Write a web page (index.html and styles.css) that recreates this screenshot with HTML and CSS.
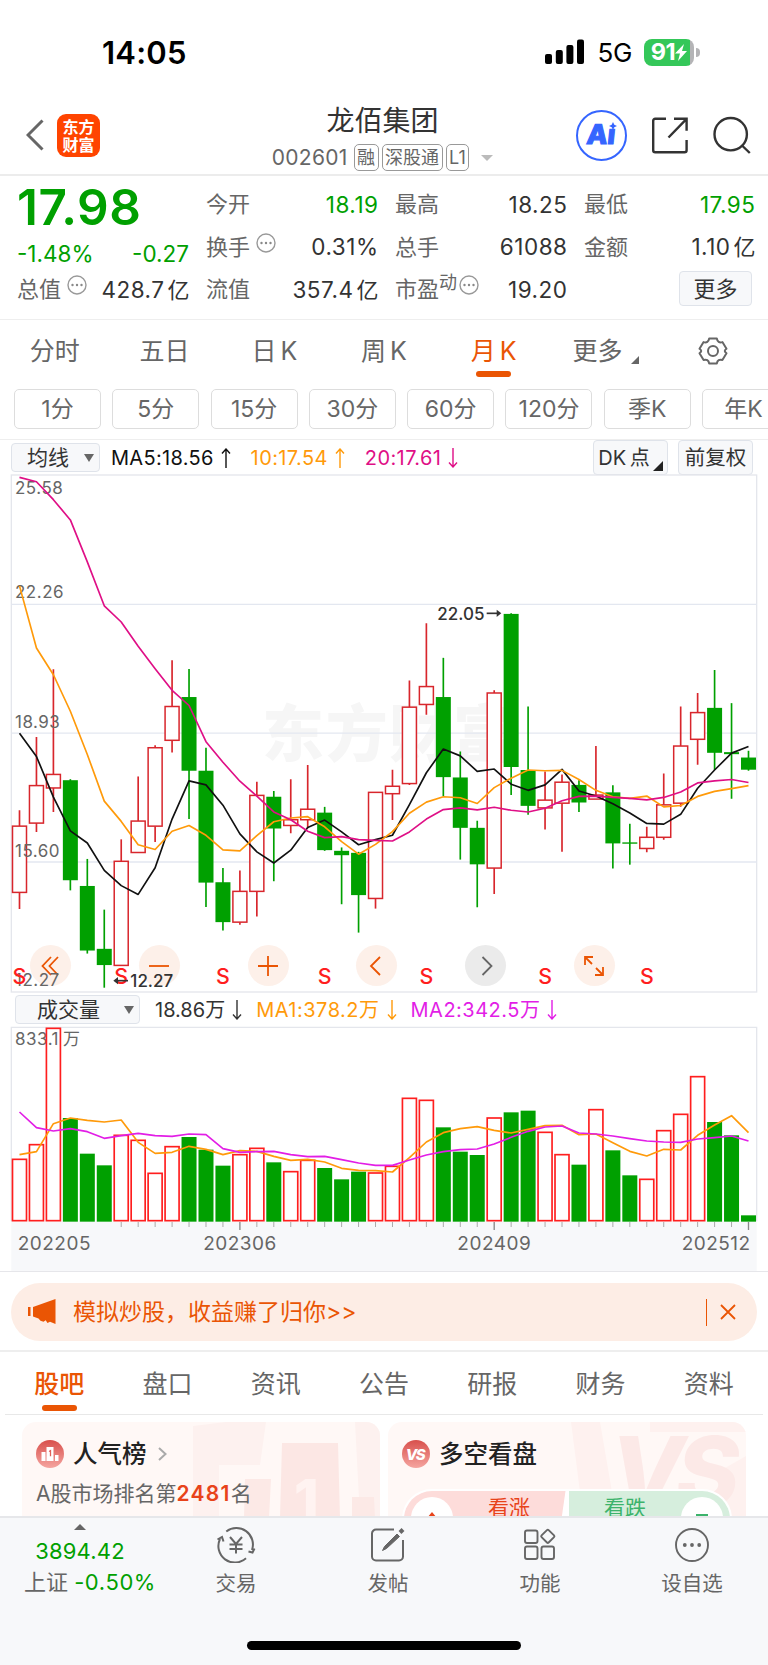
FILE: index.html
```html
<!DOCTYPE html>
<html lang="zh-CN">

<head>
    <meta charset="UTF-8">
    <meta name="viewport" content="width=device-width, initial-scale=1.0">
    <title>龙佰集团 002601</title>
    <link rel="stylesheet" href="styles.css">
</head>

<body>

    <div class="status-bar">
        <span class="clock">14:05</span>
        <div class="status-right">
            <svg class="signal" width="39" height="26" viewBox="0 0 39 26">
                <rect x="0" y="15" width="7" height="10" rx="2" />
                <rect x="10.8" y="11" width="7" height="14" rx="2" />
                <rect x="21.4" y="6" width="7" height="19" rx="2" />
                <rect x="32" y="0.5" width="7" height="24.5" rx="2" />
            </svg>
            <span class="network">5G</span>
            <div class="battery">
                <span>91</span>
                <svg width="12" height="17" viewBox="0 0 12 17"><path d="M9 0L0 9.5h5L3 17l9-10H7z" fill="#fff" /></svg>
            </div>
            <i class="battery-cap"></i>
        </div>
    </div>

    <header class="header">
        <div class="header-left">
            <svg width="18" height="32" viewBox="0 0 18 32"><path d="M16.5 1.5L2 16l14.5 14.5" fill="none" stroke="#666" stroke-width="3" /></svg>
            <div class="logo">东方<br>财富</div>
        </div>
        <div class="header-title">
            <h1>龙佰集团</h1>
            <div class="stock-code">
                <span class="code">002601</span>
                <span class="tag">融</span>
                <span class="tag">深股通</span>
                <span class="tag">L1</span>
                <i class="arrow-down"></i>
            </div>
        </div>
        <div class="header-right">
            <div class="ai">
                <span class="ai-text">A<span>ı</span></span>
                <svg class="ai-star" width="8" height="8" viewBox="0 0 8 8"><path d="M4 0l1.3 2.7L8 4 5.3 5.3 4 8 2.7 5.3 0 4l2.7-1.3z" fill="#3565ff" /></svg>
            </div>
            <svg class="share" width="38" height="37" viewBox="0 0 38 37" fill="none" stroke="#333" stroke-width="2.4">
                <path d="M15 1.8H4.2a2 2 0 0 0-2 2v29.4a2 2 0 0 0 2 2h29.4a2 2 0 0 0 2-2V23" />
                <path d="M23 1.8h12.6v12M35.6 1.8L17.5 20.5" />
            </svg>
            <svg class="search" width="38" height="38" viewBox="0 0 38 38" fill="none" stroke="#333" stroke-width="2.4">
                <circle cx="17.7" cy="18.2" r="16.2" />
                <path d="M29 29.5l7.8 7.5" />
            </svg>
        </div>
    </header>

    <section class="quote">
        <div class="price-col">
            <div class="price">17.98</div>
            <div class="change"><span>-1.48%</span><span>-0.27</span></div>
            <div class="cell"><label>总值</label><svg class="dots"><use href="#dots" /></svg><b>428.7<em>亿</em></b></div>
        </div>
        <div class="cells">
            <div class="cell"><label>今开</label><b class="down">18.19</b></div>
            <div class="cell"><label>最高</label><b>18.25</b></div>
            <div class="cell"><label>最低</label><b class="down">17.95</b></div>
            <div class="cell"><label>换手</label><svg class="dots"><use href="#dots" /></svg><b>0.31%</b></div>
            <div class="cell"><label>总手</label><b>61088</b></div>
            <div class="cell"><label>金额</label><b>1.10<em>亿</em></b></div>
            <div class="cell"><label>流值</label><b>357.4<em>亿</em></b></div>
            <div class="cell"><label>市盈<sup>动</sup></label><svg class="dots tight"><use href="#dots" /></svg><b>19.20</b></div>
            <div class="cell"><button class="more">更多</button></div>
        </div>
    </section>

    <nav class="period-tabs">
        <span>分时</span>
        <span>五日</span>
        <span>日<u>K</u></span>
        <span>周<u>K</u></span>
        <span class="active">月<u>K</u></span>
        <span class="has-more">更多<i></i></span>
        <span>
            <svg width="30" height="28" viewBox="0 0 30 28" fill="none" stroke="#666" stroke-width="2">
                <path d="M11.2 1.5h7.6c.6 3.2 2.6 4.5 5.6 3.6l4.1 6.7c-2.3 1.6-2.3 2.9 0 4.5l-4.1 6.7c-3-.9-5 .3-5.6 3.5h-7.6c-.6-3.2-2.6-4.4-5.6-3.5l-4.1-6.7c2.3-1.6 2.3-2.9 0-4.5l4.1-6.7c3 .9 5-.4 5.6-3.6z" stroke-linejoin="round" />
                <circle cx="15" cy="14" r="5" />
            </svg>
        </span>
    </nav>

    <div class="minutes">
        <span>1分</span><span>5分</span><span>15分</span><span>30分</span><span>60分</span><span>120分</span><span>季K</span><span>年K</span>
    </div>

    <div class="indicator ma-bar">
        <div class="select">均线<i></i></div>
        <span class="ma5">MA5:18.56<svg class="trend"><use href="#up" /></svg></span>
        <span class="ma10">10:17.54<svg class="trend"><use href="#up" /></svg></span>
        <span class="ma20">20:17.61<svg class="trend"><use href="#down" /></svg></span>
        <div class="dk">DK 点<i></i></div>
        <div class="fq">前复权</div>
    </div>

    <div class="chart">
        <svg id="kline" viewBox="0 15 2304 1551"></svg>
        <div class="tools">
            <span><svg viewBox="0 0 20 20"><path d="M10 1L1.500 10l8.500 9M17 1L8.500 10l8.500 9" /></svg></span>
            <span><svg viewBox="0 0 20 20"><path d="M0 10h20" /></svg></span>
            <span><svg viewBox="0 0 20 20"><path d="M0 10h20M10 0v20" /></svg></span>
            <span><svg viewBox="0 0 20 20"><path d="M13 1L4 10l9 9" /></svg></span>
            <span class="disabled"><svg viewBox="0 0 20 20"><path d="M6.500 1l9 9-9 9" /></svg></span>
            <span><svg viewBox="0 0 20 20"><path d="M1 9V1h8M1 1l7 7M19 11v8h-8M19 19l-7-7" /></svg></span>
        </div>
    </div>

    <div class="indicator vol-bar">
        <div class="select">成交量<i></i></div>
        <span class="vol">18.86万<svg class="trend"><use href="#down" /></svg></span>
        <span class="ma10">MA1:378.2万<svg class="trend"><use href="#down" /></svg></span>
        <span class="vma2">MA2:342.5万<svg class="trend"><use href="#down" /></svg></span>
    </div>

    <svg id="volume" viewBox="0 111 2304 732"></svg>

    <div class="promo-wrap">
        <div class="promo">
            <svg width="28" height="26" viewBox="0 0 28 26" fill="#ea5504">
                <path d="M0 8h2.500v9H0zM5 8L27.500 0v25L22 22.800 19.500 24l-1.800-2.800-2.200 1.500-3-1-2-2.200L5 17.500z" />
            </svg>
            <span>模拟炒股，收益赚了归你&gt;&gt;</span>
            <i></i>
            <svg width="16" height="16" viewBox="0 0 16 16"><path d="M1 1l14 14M15 1L1 15" stroke="#ea5504" stroke-width="1.800" /></svg>
        </div>
    </div>

    <nav class="info-tabs">
        <span class="active">股吧</span><span>盘口</span><span>资讯</span><span>公告</span><span>研报</span><span>财务</span><span>资料</span>
    </nav>

    <div class="cards">
        <div class="card">
            <svg class="card-bg" width="358" height="96" viewBox="0 0 358 96">
                <path d="M171 4l33-4h40l-6 43h-41v53h-26z" fill="#fdf1ef" />
                <path d="M333 0h25v96h-20z" fill="#fdf1ef" />
                <path d="M223 57h26l-2 39h-25zM330 75h22l1 21h-23z" fill="#fce9e6" />
                <path d="M260 21h56l2 75h-60z" fill="#fce7e4" />
                <text x="272" y="98" font-size="56" font-weight="800" fill="#fff3f1">1</text>
            </svg>
            <div class="card-title">
                <svg width="28" height="28" viewBox="0 0 28 28">
                    <circle cx="14" cy="14" r="14" fill="url(#badge)" />
                    <path d="M5.500 12h4v9h-4zM10.500 7h7v14h-7zM19 15h3.500v6H19z" fill="#fff" />
                    <path d="M13 11.500l1.500-.8v5.500" fill="none" stroke="#e05f58" stroke-width="1.300" />
                </svg>
                <h2>人气榜</h2>
                <svg class="chev" width="9" height="14" viewBox="0 0 9 14"><path d="M1 1l6.500 6L1 13" fill="none" stroke="#aaa" stroke-width="2" /></svg>
            </div>
            <p>A股市场排名第<strong>2481</strong>名</p>
        </div>
        <div class="card">
            <svg class="card-bg" width="358" height="96" viewBox="0 0 358 96">
                <path d="M183 0h29l12 70h-32zM262 0h96v10H262zM330 50l28-16v62h-24z" fill="#fef1ef" />
                <text x="222" y="84" font-size="96" font-weight="800" font-style="italic" letter-spacing="-8" fill="#fce9e7">VS</text>
            </svg>
            <div class="card-title">
                <svg width="28" height="28" viewBox="0 0 28 28">
                    <circle cx="14" cy="14" r="14" fill="url(#badge)" />
                    <text x="13" y="19.500" text-anchor="middle" font-size="15" font-weight="800" font-style="italic" letter-spacing="-1.500" fill="#fff">VS</text>
                </svg>
                <h2>多空看盘</h2>
            </div>
            <div class="vote">
                <div class="rise"><i><svg width="10" height="14" viewBox="0 0 10 14"><path d="M5 0l5 6H0z" fill="#e8431a" /></svg></i><span>看涨</span></div>
                <div class="fall"><span>看跌</span><i><svg width="12" height="14" viewBox="0 0 12 14"><path d="M0 2h12v5H0z" fill="#3cb36b" /></svg></i></div>
            </div>
        </div>
    </div>

    <footer class="bottom-bar">
        <div class="index">
            <i></i>
            <b>3894.42</b>
            <p>上证 <span>-0.50%</span></p>
        </div>
        <div class="item">
            <svg width="40" height="36" viewBox="0 0 40 36" fill="none" stroke="#666" stroke-width="2">
                <path d="M10.300 4.500A16.500 16.500 0 0 1 36 23M30 31.300A16.500 16.500 0 0 1 4 12" />
                <path d="M1.500 12.500l4.500-2.500 1.500 4.500M32.500 24.500l4 1 2-4" />
                <path d="M14 10l6 7 6-7M20 17v9.500M13.500 17.500h13M13.500 22h13" />
            </svg>
            <span>交易</span>
        </div>
        <div class="item">
            <svg width="36" height="36" viewBox="0 0 36 36" fill="none" stroke="#666" stroke-width="2">
                <path d="M24 2.500H6a4 4 0 0 0-4 4v23a4 4 0 0 0 4 4h23a4 4 0 0 0 4-4V13" />
                <path d="M12.500 23.500l2-4L27 7l2.500 2.500-13 12z" fill="#666" stroke-width="1" />
                <path d="M30 5.500l3-3" stroke-width="4" />
            </svg>
            <span>发帖</span>
        </div>
        <div class="item">
            <svg width="36" height="36" viewBox="0 0 36 36" fill="none" stroke="#666" stroke-width="1.900">
                <rect x="3" y="3.500" width="12.500" height="12.500" rx="2" />
                <rect x="3" y="19.500" width="12.500" height="12.500" rx="2" />
                <rect x="19.500" y="19.500" width="12.500" height="12.500" rx="2" />
                <rect x="20.800" y="4.300" width="10" height="10" rx="1.200" transform="rotate(45 25.800 9.300)" />
            </svg>
            <span>功能</span>
        </div>
        <div class="item">
            <svg width="36" height="36" viewBox="0 0 36 36" fill="none" stroke="#666" stroke-width="1.900">
                <circle cx="18" cy="18" r="16" />
                <g fill="#666" stroke="none"><circle cx="10.800" cy="18" r="1.900" /><circle cx="18" cy="18" r="1.900" /><circle cx="25.200" cy="18" r="1.900" /></g>
            </svg>
            <span>设自选</span>
        </div>
        <div class="home-indicator"></div>
    </footer>

    <!-- shared symbols -->
    <svg class="defs" width="0" height="0">
        <linearGradient id="badge" x1="0" y1="0" x2="0" y2="1">
            <stop offset="0" stop-color="#d8504c" />
            <stop offset="1" stop-color="#f5a5a0" />
        </linearGradient>
        <symbol id="dots" viewBox="0 0 20 20">
            <circle cx="10" cy="10" r="9" fill="none" stroke="#999" stroke-width="1.400" />
            <circle cx="5.500" cy="10" r="1.200" fill="#888" />
            <circle cx="10" cy="10" r="1.200" fill="#888" />
            <circle cx="14.500" cy="10" r="1.200" fill="#888" />
        </symbol>
        <symbol id="up" viewBox="0 0 10 20"><path d="M5 20V1M1 5.500L5 1l4 4.500" fill="none" stroke="currentColor" stroke-width="1.400" /></symbol>
        <symbol id="down" viewBox="0 0 10 20"><path d="M5 0v19M1 14.500L5 19l4-4.500" fill="none" stroke="currentColor" stroke-width="1.400" /></symbol>
    </svg>

    <script>
        const GREEN = '#00a000';
        const RED = '#d8262c';
        const STEP = 50.86;
        const x = i => 58.5 + i * STEP;
        // stretch the k-line values to the panel height
        const y = v => +(15 + (v - 15) * 1.0139).toFixed(1);

        // [color, high, body top, body bottom, low]
        const candles = [
            ['r', 1007, 1054, 1250, 1299], ['r', 790, 934, 1045, 1071], ['r', 590, 901, 941, 1012], ['g', 915, 918, 1214, 1244],
            ['g', 1151, 1231, 1422, 1431], ['g', 1301, 1417, 1465, 1532], ['r', 1093, 1158, 1466, 1466], ['r', 907, 1039, 1132, 1132],
            ['r', 815, 822, 1054, 1101], ['r', 563, 700, 800, 836], ['g', 589, 672, 890, 1033], ['g', 822, 890, 1221, 1293],
            ['g', 1178, 1220, 1338, 1363], ['r', 1185, 1247, 1338, 1346], ['r', 923, 963, 1247, 1321], ['g', 950, 967, 1061, 1217],
            ['r', 915, 1035, 1052, 1075], ['r', 873, 1004, 1035, 1060], ['g', 997, 1014, 1125, 1127], ['g', 1117, 1127, 1140, 1285],
            ['g', 1130, 1133, 1258, 1369], ['r', 954, 954, 1268, 1298], ['r', 887, 936, 958, 1036], ['r', 623, 702, 928, 932],
            ['r', 454, 641, 694, 724], ['g', 556, 672, 909, 965], ['g', 833, 910, 1059, 1153], ['g', 1038, 1059, 1167, 1294],
            ['r', 652, 660, 1178, 1255], ['g', 424, 426, 879, 962], ['g', 700, 888, 994, 1020], ['r', 892, 977, 1000, 1064],
            ['r', 901, 924, 986, 1130], ['g', 918, 932, 984, 1012], ['r', 817, 962, 974, 974], ['g', 933, 954, 1105, 1179],
            ['g', 1047, 1102, 1106, 1168], ['r', 1056, 1087, 1120, 1131], ['r', 898, 991, 1087, 1094], ['r', 700, 817, 986, 997],
            ['r', 660, 718, 797, 872], ['g', 592, 704, 837, 888], ['g', 690, 835, 841, 973], ['g', 831, 851, 887, 890]
        ];
        const ma5 = [779, 848, 968, 1068, 1104, 1185, 1230, 1256, 1177, 1033, 920, 932, 992, 1077, 1130, 1163, 1125, 1058, 1036, 1071, 1109, 1094, 1081, 990, 896, 826, 846, 892, 885, 930, 948, 932, 886, 950, 965, 988, 1015, 1046, 1048, 1019, 942, 888, 838, 818];
        const ma10 = [343, 527, 606, 714, 842, 980, 1040, 1109, 1123, 1069, 1052, 1081, 1124, 1127, 1082, 1041, 1030, 1026, 1056, 1100, 1137, 1108, 1070, 1016, 983, 967, 970, 987, 940, 912, 888, 890, 889, 916, 948, 967, 972, 965, 997, 993, 966, 951, 943, 934];
        const ma20 = [22, 35, 88, 148, 272, 402, 450, 522, 588, 652, 697, 804, 865, 921, 965, 1012, 1035, 1069, 1088, 1085, 1094, 1096, 1098, 1071, 1033, 1005, 1000, 1006, 998, 1007, 1012, 1001, 979, 966, 965, 969, 972, 976, 969, 953, 926, 920, 916, 925];

        const volumes = [508, 464, 115, 384, 491, 526, 436, 451, 550, 470, 441, 479, 527, 494, 475, 517, 545, 511, 534, 568, 545, 549, 529, 325, 331, 412, 485, 495, 384, 367, 362, 427, 494, 524, 359, 481, 556, 568, 422, 373, 260, 396, 436, 676];
        const vma1 = [494, 485, 401, 384, 391, 396, 390, 457, 490, 487, 469, 478, 494, 482, 484, 499, 511, 508, 516, 535, 541, 542, 546, 503, 456, 428, 416, 410, 421, 429, 418, 407, 406, 434, 432, 458, 484, 498, 478, 480, 436, 405, 377, 428];
        const vma2 = [366, 413, 423, 416, 425, 445, 437, 430, 437, 439, 432, 434, 476, 487, 485, 484, 494, 500, 499, 509, 519, 526, 526, 510, 495, 485, 479, 477, 462, 442, 424, 411, 408, 429, 432, 438, 446, 453, 456, 457, 447, 443, 438, 453];

        function line(points, color) {
            const pts = points.map((v, i) => `${x(i)},${v}`).join(' ');
            return `<polyline points="${pts}" fill="none" stroke="${color}" stroke-width="5" stroke-linejoin="round" />`;
        }

        function drawKline() {
            let s = '<rect x="34" y="15" width="2236" height="1551" class="frame" />';
            s += '<text x="786" y="862" class="watermark">东方财富</text>';
            [398, 779, 1160].forEach(v => s += `<path d="M34 ${y(v)}H2270" class="grid" />`);
            candles.forEach(([c, high, open, close, low], i) => {
                const cx = x(i);
                const [hi, top, bot, lo] = [high, open, close, low].map(y);
                if (c === 'g') {
                    s += `<path d="M${cx} ${hi}V${lo}" stroke="${GREEN}" stroke-width="5" />`;
                    s += `<rect x="${cx - 22.5}" y="${top}" width="45" height="${Math.max(bot - top, 4)}" fill="${GREEN}" />`;
                } else {
                    s += `<path d="M${cx} ${hi}V${top}M${cx} ${bot}V${lo}" stroke="${RED}" stroke-width="5" />`;
                    s += `<rect x="${cx - 21}" y="${top}" width="42" height="${bot - top}" fill="#fff" stroke="${RED}" stroke-width="4.5" />`;
                }
            });
            [[25.58, 72], [22.26, 380], [18.93, 763], ['15.60', 1144], [12.27, 1526]].forEach(([label, v]) => {
                s += `<text x="45" y="${y(v)}" class="axis">${label}</text>`;
            });
            s += line(ma5.map(y), '#111') + line(ma10.map(y), '#ff9a0a') + line(ma20.map(y), '#df0f86');
            [0, 6, 12, 18, 24, 31, 37].forEach(i => s += `<text x="${x(i)}" y="${y(1520)}" class="sell">S</text>`);
            s += '<text x="1312" y="450" class="mark">22.05</text><path d="M1460 430h32" class="mark-line" /><path d="M1490 419l14 11-14 11z" fill="#333" />';
            s += '<text x="391" y="1552" class="mark">12.27</text><path d="M384 1532h-32" class="mark-line" /><path d="M354 1521l-14 11 14 11z" fill="#333" />';
            document.getElementById('kline').innerHTML = s;
        }

        function drawVolume() {
            let s = '<rect x="34" y="694" width="2236" height="150" fill="#f7f8fa" />';
            s += '<path d="M34 694V112H2270V694" class="frame" />';
            s += '<text x="45" y="164" class="axis">833.1<tspan dx="12">万</tspan></text>';
            volumes.forEach((top, i) => {
                const cx = x(i);
                if (candles[i][0] === 'g') {
                    s += `<rect x="${cx - 22.5}" y="${top}" width="45" height="${695 - top}" fill="${GREEN}" />`;
                } else {
                    s += `<rect x="${cx - 21}" y="${top}" width="42" height="${692 - top}" fill="none" stroke="#ff1e1e" stroke-width="5" />`;
                }
                if (i > 5) {
                    const major = [13, 28, 43].includes(i);
                    s += `<path d="M${cx} 696V${major ? 720 : 711}" stroke="${major ? '#888' : '#aaa'}" stroke-width="${major ? 4 : 3}" />`;
                }
            });
            s += line(vma1, '#ff9a0a') + line(vma2, '#e21ee6');
            s += '<text x="53" y="780" class="date">202205</text><text x="720" y="780" class="date middle">202306</text>';
            s += '<text x="1483" y="780" class="date middle">202409</text><text x="2252" y="780" class="date end">202512</text>';
            document.getElementById('volume').innerHTML = s;
        }

        drawKline();
        drawVolume();
    </script>

</body>

</html>
```
FILE: styles.css
```css
/* Global Styles */
* {
    box-sizing: border-box;
}

body {
    font-family: Inter, "Noto Sans CJK SC", sans-serif;
    line-height: 1.2;
    background-color: #fff;
    margin: 0;
    width: 768px;
    height: 1665px;
    overflow: hidden;
    color: #333;
    display: flex;
    flex-direction: column;
}

body > * {
    flex-shrink: 0;
}

h1, h2, p {
    margin: 0;
    font-weight: 400;
}

svg {
    display: block;
    flex-shrink: 0;
}

i, em, u {
    font-style: normal;
    text-decoration: none;
}

span, label, b {
    white-space: nowrap;
}

.defs {
    position: absolute;
}

/* Status bar */
.status-bar {
    height: 105px;
    padding: 0 68px 0 102px;
    display: flex;
    justify-content: space-between;
    align-items: center;
    color: #000;
}

.clock {
    font-size: 31px;
    font-weight: 600;
    letter-spacing: 0.2px;
}

.status-right {
    display: flex;
    align-items: center;
    margin-bottom: 1px;
}

.network {
    font-size: 26px;
    letter-spacing: -0.3px;
    margin: 1px 12px 0 13px;
}

.battery {
    width: 50px;
    height: 27px;
    border-radius: 8px;
    background: linear-gradient(to right, #34c759 46px, #b4b4b6 46px);
    display: flex;
    align-items: center;
    justify-content: center;
    color: #fff;
    font-size: 23.500px;
    font-weight: 700;
    letter-spacing: -0.5px;
}

.battery-cap {
    width: 4px;
    height: 9px;
    margin-left: 2px;
    border-radius: 0 4px 4px 0;
    background: #b4b4b6;
}

/* Header */
.header {
    height: 71px;
    border-bottom: 2px solid #ececec;
    display: grid;
    grid-template-columns: 240px 1fr 240px;
}

.header-left {
    display: flex;
    align-items: center;
    padding: 0 0 9px 26px;
    gap: 13px;
}

.logo {
    width: 43px;
    height: 43px;
    border-radius: 9px;
    background: #ff4400;
    color: #fff;
    font-size: 16px;
    font-weight: 700;
    line-height: 18px;
    text-align: center;
    padding-top: 4px;
}

.header-title {
    text-align: center;
    display: flex;
    flex-direction: column;
    align-items: center;
    padding-right: 3px;
}

.header-title h1 {
    font-size: 28px;
    line-height: 32px;
}

.stock-code {
    display: flex;
    align-items: center;
    margin-top: 7px;
    color: #666;
}

.code {
    font-size: 21px;
    letter-spacing: 0.3px;
    margin-right: 6px;
}

.tag {
    height: 27px;
    line-height: 25px;
    padding: 0 2.500px;
    border: 1.5px solid #999;
    border-radius: 5px;
    font-size: 18px;
    margin-right: 3px;
}

.arrow-down {
    margin-left: 9px;
    border: 6px solid transparent;
    border-top-color: #bbb;
    border-bottom: 0;
}

.header-right {
    display: flex;
    align-items: center;
    padding: 0 0 9px 48px;
}

.ai {
    position: relative;
    width: 51px;
    height: 51px;
    border: 2.5px solid #3565ff;
    border-radius: 50%;
    color: #3565ff;
    font-size: 27px;
    font-weight: 800;
    line-height: 45px;
    text-align: center;
}

.ai-text {
    display: inline-block;
    -webkit-text-stroke: 1.2px #3565ff;
    transform: skewX(-6deg);
}

.ai-star {
    position: absolute;
    right: 8px;
    top: 10px;
}

.share {
    margin-left: 24px;
}

.search {
    margin-left: 24px;
}

/* Quote */
.quote {
    height: 144px;
    padding: 7px 12px 0 17px;
    border-bottom: 1px solid #eee;
    display: flex;
    gap: 17px;
}

.price-col {
    width: 172px;
    display: flex;
    flex-direction: column;
}

.price {
    height: 50px;
    line-height: 49px;
    font-size: 49.500px;
    font-weight: 600;
    color: #00a000;
    letter-spacing: 0.5px;
}

.change {
    height: 35px;
    line-height: 41px;
    font-size: 22.500px;
    color: #00a000;
    display: flex;
    justify-content: space-between;
}

.cells {
    flex: 1;
    display: grid;
    grid-template-columns: 172px 172px 171px;
    grid-auto-rows: 42.5px;
    column-gap: 17px;
}

.cell {
    height: 42.5px;
    display: flex;
    align-items: center;
    font-size: 22px;
}

.cell label {
    color: #666;
}

.cell b {
    font-size: 22.500px;
    font-weight: 400;
    letter-spacing: 0.5px;
    margin-left: auto;
    margin-right: -0.5px;
}

.cell em {
    font-size: 22px;
    letter-spacing: 0;
    margin-left: 3px;
}

.cell sup {
    font-size: 18px;
    line-height: 0;
    vertical-align: 8px;
}

.cell .down {
    color: #00a000;
}

.dots {
    width: 20px;
    height: 20px;
    margin: 0 0 8px 6px;
}

.dots.tight {
    margin-left: 2px;
}

.more {
    margin-left: auto;
    margin-right: 3px;
    margin-bottom: 1px;
    width: 73px;
    height: 35px;
    padding: 0;
    font: inherit;
    color: #333;
    background: #f7f8fa;
    border: 1.5px solid #dfe3ea;
    border-radius: 4px;
}

/* Period tabs */
.period-tabs {
    height: 69px;
    display: grid;
    grid-template-columns: repeat(7, 1fr);
    font-size: 25px;
    color: #666;
}

.period-tabs span {
    position: relative;
    display: flex;
    align-items: center;
    justify-content: center;
    padding-bottom: 7px;
}

.period-tabs u {
    margin-left: 4px;
}

.period-tabs .has-more {
    padding-left: 5px;
}

.period-tabs .active,
.info-tabs .active {
    color: #ea5504;
}

.period-tabs .active::after,
.info-tabs .active::after {
    content: "";
    position: absolute;
    bottom: 12px;
    width: 35px;
    height: 6px;
    border-radius: 3px;
    background: #ea5504;
}

.has-more i {
    margin: 18px 0 0 9px;
    border-left: 8px solid transparent;
    border-bottom: 8px solid #666;
}

.minutes {
    height: 51px;
    padding-left: 14px;
    border-bottom: 1px solid #eee;
    display: flex;
    gap: 11.300px;
    overflow: hidden;
}

.minutes span {
    flex: 0 0 87px;
    height: 40px;
    line-height: 39px;
    border: 1.5px solid #ddd;
    border-radius: 5px;
    text-align: center;
    font-size: 23px;
    color: #666;
}

.minutes span:last-child {
    text-indent: -4px;
}

/* Indicator rows */
.indicator {
    display: flex;
    align-items: center;
    font-size: 20px;
}

.indicator span {
    display: flex;
    align-items: center;
}

.ma-bar {
    height: 35px;
    padding-left: 11px;
}

.vol-bar {
    height: 35px;
    padding-left: 15px;
}

.select {
    width: 89px;
    height: 29px;
    padding-left: 15px;
    font-size: 21px;
    border: 1px solid #dfe3ea;
    border-radius: 4px;
    background: #f7f8fa;
    display: flex;
    align-items: center;
    justify-content: space-between;
}

.select i {
    margin-right: 5px;
    border: 5px solid transparent;
    border-top: 8px solid #666;
    border-bottom: 0;
}

.vol-bar .select {
    width: 125px;
    padding-left: 21px;
}

.trend {
    width: 10px;
    height: 20px;
    margin-left: 7px;
}

.ma5 {
    color: #111;
    margin-left: 11px;
    letter-spacing: 0.3px;
}

.ma10 {
    color: #ff9a0a;
    margin-left: 20px;
    letter-spacing: 0.4px;
}

.ma20 {
    color: #df0f86;
    margin-left: 20px;
    letter-spacing: 0.4px;
}

.vol {
    margin-left: 15px;
}

.vol-bar .ma10 {
    margin-left: 14px;
    letter-spacing: 0.5px;
}

.vol-bar .vma2 {
    color: #e21ee6;
    margin-left: 14px;
    letter-spacing: 0.5px;
}

.dk,
.fq {
    position: relative;
    width: 75px;
    height: 35px;
    line-height: 34px;
    text-align: center;
    background: #f7f8fa;
    border: 1px solid #dfe3ea;
    border-radius: 4px;
    white-space: nowrap;
}

.dk {
    margin-left: auto;
    padding-right: 13px;
    word-spacing: -2px;
}

.dk i {
    position: absolute;
    right: 4px;
    bottom: 3px;
    border-left: 10px solid transparent;
    border-bottom: 10px solid #222;
}

.fq {
    font-size: 20.500px;
    margin: 0 15px 0 10px;
}

/* Charts */
.chart {
    position: relative;
    height: 517px;
}

#kline {
    position: relative;
    z-index: 1;
    width: 768px;
    height: 517px;
    overflow: visible;
}

#volume {
    width: 768px;
    height: 244px;
    overflow: visible;
}

.frame {
    fill: none;
    stroke: #e4e6ec;
    stroke-width: 4;
}

.grid {
    stroke: #e3e7f0;
    stroke-width: 4;
}

.watermark {
    font-size: 186px;
    font-weight: 900;
    letter-spacing: 5px;
    fill: #f6f6f6;
}

.axis {
    font-size: 51px;
    letter-spacing: 1.500px;
    fill: #666;
}

.date {
    font-size: 57px;
    letter-spacing: 1.500px;
    fill: #666;
}

.middle {
    text-anchor: middle;
}

.end {
    text-anchor: end;
}

.mark {
    font-size: 51px;
    font-weight: 500;
    fill: #333;
}

.mark-line {
    stroke: #333;
    stroke-width: 5;
}

.sell {
    font-size: 64px;
    font-weight: 500;
    fill: #ff1e1e;
    text-anchor: middle;
}

.tools {
    position: absolute;
    left: 30px;
    top: 470px;
    display: flex;
    gap: 67.800px;
}

.tools span {
    width: 41px;
    height: 41px;
    border-radius: 50%;
    background: #fdf0e9;
    display: flex;
    align-items: center;
    justify-content: center;
}

.tools svg {
    width: 20px;
    height: 20px;
    fill: none;
    stroke: #ea5504;
    stroke-width: 1.800;
}

.tools .disabled {
    background: #ebebeb;
}

.tools .disabled svg {
    stroke: #666;
}

/* Promo banner */
.promo-wrap {
    height: 81px;
    padding: 11px 11px 0;
    border-top: 1px solid #e6e6ea;
    border-bottom: 2px solid #eee;
}

.promo {
    height: 58px;
    border-radius: 29px;
    background: #fdede5;
    color: #ea5504;
    font-size: 23px;
    padding: 0 21px 0 17px;
    display: flex;
    align-items: center;
}

.promo span {
    margin: 2px 0 0 17px;
}

.promo i {
    width: 1.500px;
    height: 27px;
    margin: 0 13px 0 auto;
    background: #ea5504;
}

/* Info tabs */
.info-tabs {
    height: 63px;
    margin: 0 5px;
    border-bottom: 1px solid #e8e8e8;
    display: grid;
    grid-template-columns: repeat(7, 1fr);
    font-size: 25px;
    color: #666;
}

.info-tabs span {
    position: relative;
    display: flex;
    justify-content: center;
    line-height: 62px;
    padding-top: 1px;
}

.info-tabs .active {
    font-weight: 500;
}

.info-tabs .active::after {
    bottom: 4px;
}

/* Cards */
.cards {
    height: 101px;
    padding: 7px 22px 0;
    display: flex;
    gap: 8px;
    overflow: hidden;
}

.card {
    position: relative;
    flex: 1;
    height: 130px;
    border-radius: 14px;
    background: #fff8f6;
    padding: 17px 14px 0;
    overflow: hidden;
}

.card-bg {
    position: absolute;
    left: 0;
    top: 0;
}

.card-title {
    position: relative;
    display: flex;
    align-items: center;
    height: 29px;
}

.card-title h2 {
    margin: 2px 0 0 9px;
    font-size: 24.500px;
    font-weight: 500;
    color: #222;
}

.chev {
    margin-left: 11px;
}

.card p {
    position: relative;
    margin-top: 9px;
    font-size: 21px;
    line-height: 34px;
    color: #666;
}

.card p strong {
    color: #e8431a;
    font-weight: 600;
    letter-spacing: 1.300px;
}

.vote {
    position: relative;
    display: flex;
    gap: 3px;
    height: 60px;
    margin: 21px 0 0 0;
    border: 2px solid #fff;
    border-radius: 30px;
    overflow: hidden;
    background: #fff;
    font-size: 21px;
}

.vote div {
    flex: 1;
    display: flex;
    line-height: 33px;
}

.vote div i {
    width: 42px;
    height: 42px;
    margin: 6px 7px 0;
    border-radius: 50%;
    background: #fff;
    display: flex;
    justify-content: center;
    padding-top: 15px;
}

.rise {
    background: #fddcda;
    color: #e8431a;
    clip-path: polygon(0 0, 100% 0, calc(100% - 8px) 100%, 0 100%);
}

.rise span {
    margin-left: 28px;
}

.fall {
    background: #d6eedd;
    color: #3cb36b;
    justify-content: flex-end;
    clip-path: polygon(0 0, 100% 0, 100% 100%, -8px 100%);
}

.fall span {
    margin-right: 28px;
}

/* Bottom bar */
.bottom-bar {
    position: relative;
    height: 149px;
    border-top: 2px solid #e6e7ea;
    background: #f7f8fa;
    display: grid;
    grid-template-columns: 160px repeat(4, 1fr);
    color: #666;
    font-size: 20.500px;
}

.index {
    display: flex;
    flex-direction: column;
    align-items: center;
    padding-top: 6px;
}

.index i {
    border: 6px solid transparent;
    border-bottom-color: #666;
    border-top: 0;
}

.index b {
    font-size: 22px;
    font-weight: 400;
    letter-spacing: 0.2px;
    line-height: 28px;
    margin-top: 7px;
    color: #00a000;
}

.index p {
    font-size: 22px;
    line-height: 34px;
    padding-left: 20px;
    white-space: nowrap;
}

.index span {
    color: #00a000;
    letter-spacing: 0.6px;
}

.item {
    display: flex;
    flex-direction: column;
    align-items: center;
    padding-top: 9px;
}

.item span {
    line-height: 30px;
    margin-top: 6px;
}

.home-indicator {
    position: absolute;
    left: 247px;
    bottom: 15px;
    width: 274px;
    height: 9px;
    border-radius: 5px;
    background: #000;
}
```
